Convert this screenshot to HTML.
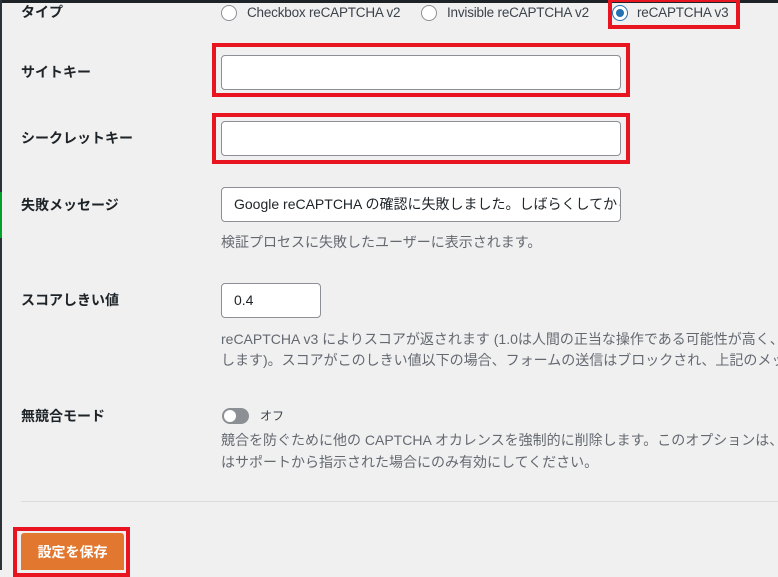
<!DOCTYPE html>
<html><head><meta charset="utf-8"><style>
body{margin:0;width:778px;height:570px;overflow:hidden;background:#f0f0f1;position:relative;font-family:"Liberation Sans","Noto Sans CJK JP",sans-serif;font-size:14px;color:#1d2327}
.a{position:absolute}
.lbl{position:absolute;left:21px;font-weight:bold;font-size:14px;line-height:20px}
.inp{position:absolute;background:#fff;border:1px solid #8c8f94;border-radius:4px;box-sizing:border-box;font-size:14px;line-height:33px;padding-left:12px;white-space:nowrap;overflow:hidden;text-overflow:clip}
.red{position:absolute;border:4px solid #e8141f;box-sizing:border-box}
.help{position:absolute;left:221px;width:557px;overflow:hidden;color:#646970;font-size:14px;line-height:21px;white-space:nowrap}
.radio{position:absolute;top:5px;width:16px;height:16px;border:1px solid #8c8f94;border-radius:50%;background:#fff;box-sizing:border-box}
.rt{position:absolute;top:4px;font-size:13.5px;letter-spacing:-0.2px;line-height:18px;color:#3c434a;white-space:nowrap}
</style></head><body>
<div class="a" style="left:0;top:0;width:778px;height:3px;background:#1d2327"></div>
<div class="a" style="left:0;top:0;width:2px;height:570px;background:#2c3338"></div>
<div class="a" style="left:0;top:192px;width:2px;height:46px;background:#00a32a"></div>

<div class="lbl" style="top:2px">タイプ</div>
<div class="radio" style="left:221px"></div><div class="rt" style="left:247px">Checkbox reCAPTCHA v2</div>
<div class="radio" style="left:421px"></div><div class="rt" style="left:447px">Invisible reCAPTCHA v2</div>
<div class="radio" style="left:612px;border-color:#2271b1"><div style="position:absolute;left:3px;top:3px;width:8px;height:8px;border-radius:50%;background:#2271b1"></div></div><div class="rt" style="left:637px">reCAPTCHA v3</div>
<div class="red" style="left:608px;top:-2px;width:132px;height:31px"></div>

<div class="lbl" style="top:62px">サイトキー</div>
<div class="inp" style="left:221px;top:55px;width:400px;height:35px"></div>
<div class="red" style="left:212px;top:43px;width:418px;height:54px"></div>

<div class="lbl" style="top:128px">シークレットキー</div>
<div class="inp" style="left:221px;top:121px;width:400px;height:35px"></div>
<div class="red" style="left:212px;top:113px;width:418px;height:51px"></div>

<div class="lbl" style="top:195px">失敗メッセージ</div>
<div class="inp" style="left:221px;top:187px;width:400px;height:35px">Google reCAPTCHA の確認に失敗しました。しばらくしてから再度お試しください。</div>
<div class="help" style="top:232px">検証プロセスに失敗したユーザーに表示されます。</div>

<div class="lbl" style="top:290px">スコアしきい値</div>
<div class="inp" style="left:221px;top:283px;width:100px;height:35px">0.4</div>
<div class="help" style="top:329px">reCAPTCHA v3 によりスコアが返されます (1.0は人間の正当な操作である可能性が高く、0.0はボットである可能性が高いことを示</div>
<div class="help" style="top:350px">します)。スコアがこのしきい値以下の場合、フォームの送信はブロックされ、上記のメッセージが表示されます。</div>

<div class="lbl" style="top:406px">無競合モード</div>
<div class="a" style="left:222px;top:408px;width:27px;height:16px;border-radius:8px;background:#8c8f94"><div style="position:absolute;left:2px;top:2px;width:12px;height:12px;border-radius:50%;background:#fff"></div></div>
<div class="a" style="left:260px;top:406px;font-size:12px;line-height:20px;color:#3c434a">オフ</div>
<div class="help" style="top:430px">競合を防ぐために他の CAPTCHA オカレンスを強制的に削除します。このオプションは、サイトに問題がある場合、また</div>
<div class="help" style="top:452px">はサポートから指示された場合にのみ有効にしてください。</div>

<div class="a" style="left:21px;top:501px;width:757px;height:1px;background:#dcdcde"></div>

<div class="a" style="left:21px;top:533px;width:103px;height:37px;background:#e27730;border-radius:3px 3px 0 0;color:#fff;font-weight:bold;font-size:14px;line-height:38px;text-align:center">設定を保存</div>
<div class="red" style="left:13px;top:527px;width:117px;height:50px"></div>
</body></html>
